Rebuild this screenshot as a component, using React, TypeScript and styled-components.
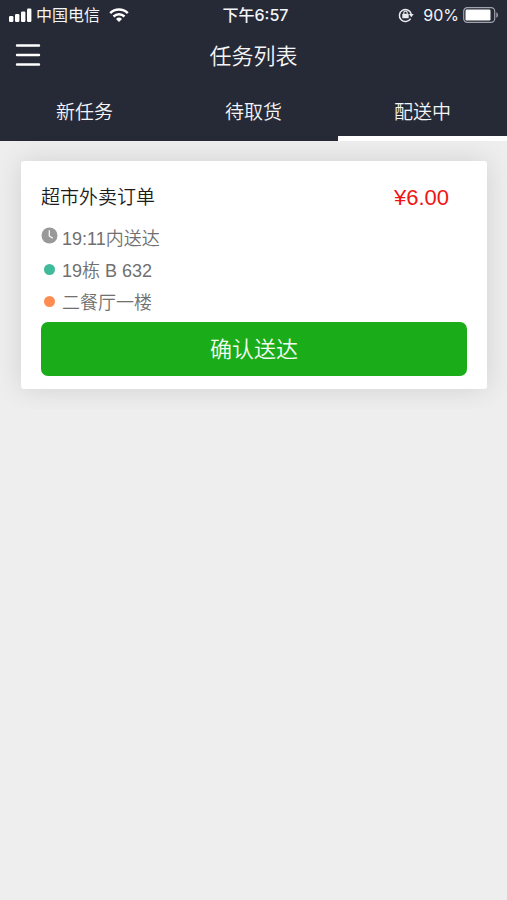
import React, { useState } from "react";
import styled, { createGlobalStyle } from "styled-components";

const GlobalStyle = createGlobalStyle`
  * { box-sizing: border-box; }
  body {
    margin: 0;
    background: #eeeeee;
    font-family: "Liberation Sans", "Noto Sans CJK SC", sans-serif;
  }
  button { font-family: inherit; border: 0; padding: 0; cursor: pointer; }
`;

const Header = styled.header`
  background: #262a36;
  color: #f4f5f8;
`;

const StatusBar = styled.div`
  display: grid;
  grid-template-columns: 1fr auto 1fr;
  align-items: center;
  height: 30px;
  padding: 0 8px;
  font-family: Inter, "Noto Sans CJK SC", sans-serif;
  font-size: 16px;
  line-height: 24px;
`;

const StatusGroup = styled.div<{ $end?: boolean }>`
  display: flex;
  align-items: center;
  justify-content: ${(p) => (p.$end ? "flex-end" : "flex-start")};
  gap: 4px;
  svg { display: block; flex: none; }
`;

const Carrier = styled.span`
  margin-right: 5px;
`;

const Percent = styled.span`
  margin-left: 5px;
`;

const Clock = styled.time`
  font-weight: 500;
  padding-left: 4px;
`;

const NavBar = styled.div`
  display: grid;
  grid-template-columns: 1fr auto 1fr;
  align-items: center;
  height: 52px;
  padding: 0 15px;
`;

const MenuButton = styled.button`
  display: block;
  width: 26px;
  height: 26px;
  background: none;
  color: #ffffff;
  svg { display: block; }
`;

const PageTitle = styled.h1`
  margin: 0;
  padding-top: 2px;
  font-size: 22px;
  line-height: 32px;
  font-weight: 350;
`;

const Tabs = styled.nav`
  display: grid;
  grid-template-columns: repeat(3, 1fr);
`;

const Tab = styled.button<{ $active: boolean }>`
  height: 59px;
  background: none;
  color: inherit;
  font-size: 19px;
  line-height: 28px;
  font-weight: 350;
  border-bottom: 5px solid ${(p) => (p.$active ? "#ffffff" : "transparent")};
  padding-top: 7px;
`;

const Content = styled.main`
  padding: 20px 20px 20px 21px;
`;

const Card = styled.article`
  background: #ffffff;
  border-radius: 3px;
  box-shadow: 0 0 28px rgba(0, 0, 0, 0.12);
  padding: 21px 20px 13px;
`;

const CardHead = styled.div`
  display: flex;
  align-items: center;
  justify-content: space-between;
  padding-right: 18px;
  height: 32px;
`;

const OrderTitle = styled.h2`
  margin: 0;
  font-size: 19px;
  line-height: 32px;
  font-weight: 350;
  color: #1c1c1c;
`;

const Price = styled.span`
  font-size: 22px;
  line-height: 32px;
  color: #f01414;
`;

const Details = styled.ul`
  list-style: none;
  margin: 9px 0 3px;
  padding: 0;
`;

const Detail = styled.li`
  display: flex;
  align-items: center;
  gap: 4px;
  height: 32px;
  font-size: 18px;
  line-height: 32px;
  font-weight: 350;
  color: #707070;
`;

const Marker = styled.span<{ $lift: number }>`
  display: flex;
  justify-content: center;
  width: 17px;
  padding-bottom: ${(p) => p.$lift}px;
`;

const Dot = styled.i<{ $color: string }>`
  width: 11px;
  height: 11px;
  border-radius: 50%;
  background: ${(p) => p.$color};
`;

const ConfirmButton = styled.button`
  display: block;
  width: 100%;
  height: 54px;
  padding-top: 2px;
  border-radius: 7px;
  background: #1aad19;
  color: #f4fbf4;
  font-size: 22px;
  line-height: 32px;
  font-weight: 350;
`;

const SignalIcon = () => (
  <svg width="24" height="14" viewBox="0 0 24 14" fill="#fff" aria-hidden="true">
    <rect x="1" y="8" width="4.4" height="6" rx="1.2" />
    <rect x="7" y="6" width="4.4" height="8" rx="1.2" />
    <rect x="13" y="3.4" width="4.4" height="10.6" rx="1.2" />
    <rect x="19" y=".6" width="4.4" height="13.4" rx="1.2" />
  </svg>
);

const WifiIcon = () => (
  <svg width="20" height="14" viewBox="0 0 20 14" aria-hidden="true">
    <g fill="none" stroke="#fff" strokeWidth="2.5">
      <path d="M1.2 5.1a12.6 12.6 0 0 1 17.6 0" />
      <path d="M4.5 8.5a7.9 7.9 0 0 1 11 0" />
    </g>
    <path d="M7 10.9a4.4 4.4 0 0 1 6 0L10 14z" fill="#fff" />
  </svg>
);

const RotationLockIcon = () => (
  <svg width="16" height="16" viewBox="0 0 16 16" fill="none" stroke="#e9ebf0" aria-hidden="true">
    <path d="M12.6 11.6A6 6 0 1 1 13.2 7" strokeWidth="1.5" />
    <path d="M10.9 7h4.8l-2.4 3.2z" fill="#e9ebf0" stroke="none" />
    <rect x="4.3" y="6.8" width="6.4" height="4.5" rx=".6" fill="#e9ebf0" stroke="none" />
    <path d="M5.8 7V5.8a1.7 1.7 0 0 1 3.4 0V7" strokeWidth="1.1" />
  </svg>
);

const BatteryIcon = () => (
  <svg width="36" height="16" viewBox="0 0 36 16" aria-hidden="true">
    <rect x=".7" y=".7" width="31" height="14.6" rx="3.6" fill="none" stroke="#a0a3ab" strokeWidth="1.2" />
    <rect x="2.5" y="2.5" width="25" height="11" rx="1.2" fill="#fff" />
    <path d="M33.3 5.2c2.2.8 2.2 4.8 0 5.6z" fill="#a0a3ab" />
  </svg>
);

const MenuIcon = () => (
  <svg width="26" height="26" viewBox="0 0 26 26" stroke="currentColor" strokeWidth="2.4" strokeLinecap="round" aria-hidden="true">
    <path d="M2 2.5h22M2 12h22M2 21.5h22" />
  </svg>
);

const TimeIcon = () => (
  <svg width="17" height="17" viewBox="0 0 17 17" aria-hidden="true">
    <circle cx="8.5" cy="8.5" r="8" fill="#999" />
    <path d="M8.3 3.2v5.8l3.4 2.2" fill="none" stroke="#fff" strokeWidth="1.2" />
  </svg>
);

const tabNames = ["新任务", "待取货", "配送中"];

export default function App() {
  const [active, setActive] = useState(2);
  return (
    <>
      <GlobalStyle />
      <Header>
        <StatusBar>
          <StatusGroup>
            <SignalIcon />
            <Carrier>中国电信</Carrier>
            <WifiIcon />
          </StatusGroup>
          <Clock>下午6:57</Clock>
          <StatusGroup $end>
            <RotationLockIcon />
            <Percent>90%</Percent>
            <BatteryIcon />
          </StatusGroup>
        </StatusBar>
        <NavBar>
          <MenuButton aria-label="菜单">
            <MenuIcon />
          </MenuButton>
          <PageTitle>任务列表</PageTitle>
        </NavBar>
        <Tabs>
          {tabNames.map((name, i) => (
            <Tab
              key={name}
              $active={i === active}
              aria-current={i === active ? "page" : undefined}
              onClick={() => setActive(i)}
            >
              {name}
            </Tab>
          ))}
        </Tabs>
      </Header>
      <Content>
        <Card>
          <CardHead>
            <OrderTitle>超市外卖订单</OrderTitle>
            <Price>¥6.00</Price>
          </CardHead>
          <Details>
            <Detail>
              <Marker $lift={8}><TimeIcon /></Marker>
              19:11内送达
            </Detail>
            <Detail>
              <Marker $lift={4}><Dot $color="#3fba9a" /></Marker>
              19栋 B 632
            </Detail>
            <Detail>
              <Marker $lift={4}><Dot $color="#ff8d52" /></Marker>
              二餐厅一楼
            </Detail>
          </Details>
          <ConfirmButton>确认送达</ConfirmButton>
        </Card>
      </Content>
    </>
  );
}
